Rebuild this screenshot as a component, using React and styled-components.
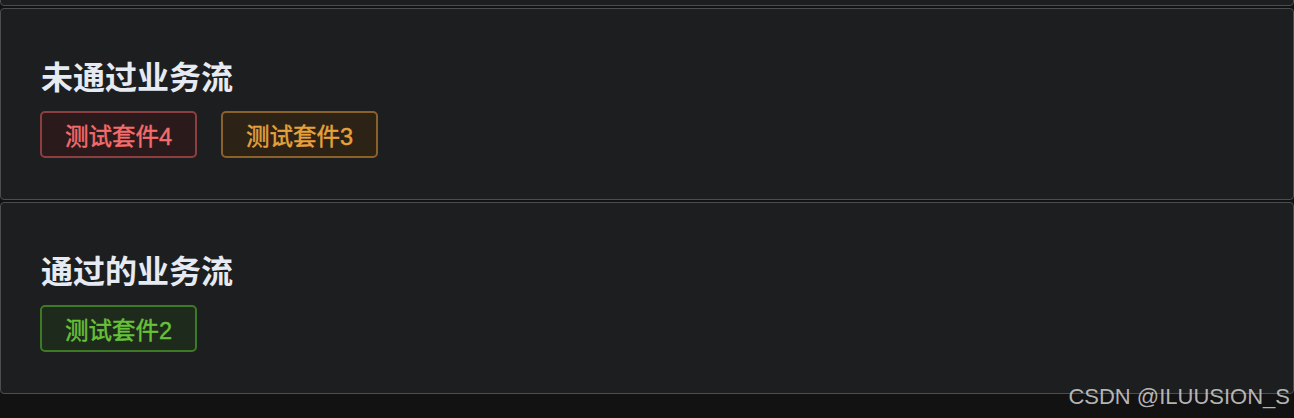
import React from 'react'
import styled, { createGlobalStyle } from 'styled-components'

const GlobalStyle = createGlobalStyle`
  html, body {
    margin: 0;
    padding: 0;
    background: #121212;
    font-family: "Liberation Sans", "Noto Sans CJK SC", sans-serif;
  }
`

const Page = styled.div`
  position: relative;
  height: 418px;
  overflow: hidden;
  background: #121212;
`

const Stack = styled.div`
  display: flex;
  flex-direction: column;
  gap: 2px;
  margin-top: -186px;
`

const Card = styled.div`
  background: #1d1e1f;
  border: 1px solid #4c4d4f;
  border-radius: 4px;
  padding: 49px 40px 40px 39px;
  height: 192px;
  box-sizing: border-box;
`

const Title = styled.h3`
  margin: 0 0 13px 1px;
  font-size: 32px;
  line-height: 40px;
  font-weight: 700;
  color: #e5eaf3;
`

const TagRow = styled.div`
  display: flex;
  gap: 24px;
`

const tagColors = {
  danger: { bg: '#2b1a1c', border: '#8b3f40', text: '#f56c6c' },
  warning: { bg: '#2c2316', border: '#8a6128', text: '#e6a23c' },
  success: { bg: '#1e2a1b', border: '#3e7a26', text: '#67c23a' },
}

const Tag = styled.span`
  display: inline-flex;
  align-items: center;
  box-sizing: border-box;
  height: 47px;
  padding: 0 23px 0 23px;
  border-radius: 5px;
  font-size: 23.5px;
  -webkit-text-stroke: 0.45px currentColor;
  background: ${p => tagColors[p.$type].bg};
  border: 2px solid ${p => tagColors[p.$type].border};
  color: ${p => tagColors[p.$type].text};
`

const Watermark = styled.div`
  position: absolute;
  right: 4px;
  bottom: 8px;
  font-family: "Liberation Sans", Arial, sans-serif;
  font-size: 22px;
  color: rgba(210, 210, 210, 0.85);
`

const flows = [
  { title: '', tags: [] },
  { title: '未通过业务流', tags: [['测试套件4', 'danger'], ['测试套件3', 'warning']] },
  { title: '通过的业务流', tags: [['测试套件2', 'success']] },
]

export default function App() {
  return (
    <Page>
      <GlobalStyle />
      <Stack>
        {flows.map((f, i) => (
          <Card key={i}>
            {f.title && <Title>{f.title}</Title>}
            <TagRow>
              {f.tags.map(([label, type]) => (
                <Tag key={label} $type={type}>{label}</Tag>
              ))}
            </TagRow>
          </Card>
        ))}
      </Stack>
      <Watermark>CSDN @ILUUSION_S</Watermark>
    </Page>
  )
}
